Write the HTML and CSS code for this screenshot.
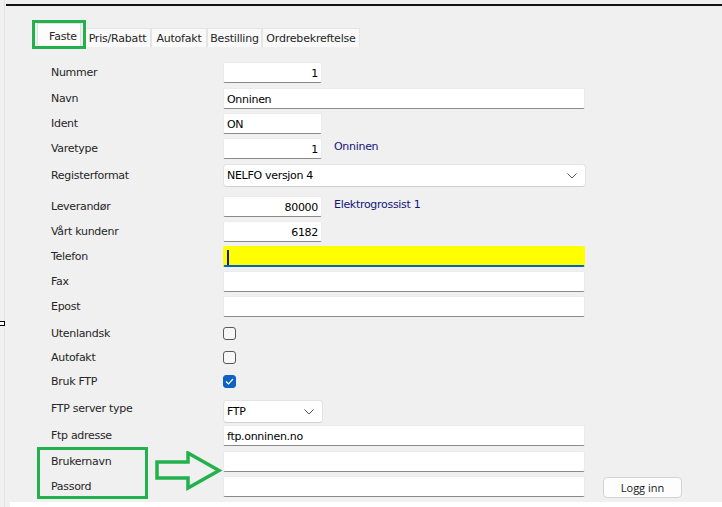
FILE: index.html
```html
<!DOCTYPE html>
<html lang="no">
<head>
    <meta charset="UTF-8">
    <title>Leverandør</title>
    <link rel="stylesheet" href="styles.css">
</head>
<body>

<div class="marker"></div>

<div class="window">
    <div class="topline"></div>

    <div class="tabs">
        <div class="tab active">Faste</div>
        <div class="tab w-pris">Pris/Rabatt</div>
        <div class="tab w-auto">Autofakt</div>
        <div class="tab w-best">Bestilling</div>
        <div class="tab w-ordre">Ordrebekreftelse</div>
    </div>

    <div class="form">
        <div class="row h26">
            <div class="label">Nummer</div>
            <div class="input short num">1</div>
        </div>
        <div class="row">
            <div class="label">Navn</div>
            <div class="input wide">Onninen</div>
        </div>
        <div class="row">
            <div class="label">Ident</div>
            <div class="input short">ON</div>
        </div>
        <div class="row h26">
            <div class="label">Varetype</div>
            <div class="input short num">1</div>
            <div class="info">Onninen</div>
        </div>
        <div class="row h32">
            <div class="label tall">Registerformat</div>
            <div class="select wide">
                <span>NELFO versjon 4</span>
                <svg width="10" height="6" viewBox="0 0 10 6"><path d="M0.5 0.5 L5 5 L9.5 0.5" fill="none" stroke="#555" stroke-width="1"/></svg>
            </div>
        </div>
        <div class="row">
            <div class="label">Leverandør</div>
            <div class="input short num">80000</div>
            <div class="info">Elektrogrossist 1</div>
        </div>
        <div class="row">
            <div class="label">Vårt kundenr</div>
            <div class="input short num">6182</div>
        </div>
        <div class="row">
            <div class="label">Telefon</div>
            <div class="input wide focus"><span class="caret"></span></div>
        </div>
        <div class="row">
            <div class="label">Fax</div>
            <div class="input wide"></div>
        </div>
        <div class="row h31">
            <div class="label">Epost</div>
            <div class="input wide"></div>
        </div>
        <div class="row h24">
            <div class="label check-label">Utenlandsk</div>
            <span class="checkbox"></span>
        </div>
        <div class="row h24">
            <div class="label check-label">Autofakt</div>
            <span class="checkbox"></span>
        </div>
        <div class="row">
            <div class="label check-label">Bruk FTP</div>
            <span class="checkbox checked">
                <svg width="9" height="7" viewBox="0 0 9 7"><path d="M1 3.5 L3.5 6 L8 1" fill="none" stroke="#fff" stroke-width="1.2"/></svg>
            </span>
        </div>
        <div class="row">
            <div class="label small">FTP server type</div>
            <div class="select short">
                <span>FTP</span>
                <svg width="10" height="6" viewBox="0 0 10 6"><path d="M0.5 0.5 L5 5 L9.5 0.5" fill="none" stroke="#555" stroke-width="1"/></svg>
            </div>
        </div>
        <div class="row h26">
            <div class="label">Ftp adresse</div>
            <div class="input wide">ftp.onninen.no</div>
        </div>
        <div class="row">
            <div class="label">Brukernavn</div>
            <div class="input wide"></div>
        </div>
        <div class="row">
            <div class="label">Passord</div>
            <div class="input wide"></div>
            <button class="login">Logg inn</button>
        </div>
    </div>

    <div class="bottom"></div>

    <!-- annotation marks drawn over the screenshot -->
    <div class="mark mark-tab"></div>
    <div class="mark mark-login"></div>
    <svg class="arrow" width="68" height="40" viewBox="0 0 68 40">
        <path d="M2 11 H33 V2 L64 19.5 L33 37 V27 H2 Z" fill="none" stroke="#22b14c" stroke-width="3.5" stroke-linejoin="miter"/>
    </svg>
</div>

</body>
</html>
```

FILE: styles.css
```css
body {
    margin: 0;
    background-color: #f0f0f0;
    font-family: "DejaVu Sans", sans-serif;
    font-size: 11px;
    color: #262626;
    position: relative;
}
.window {
    position: relative;
    width: 718px;
    height: 507px;
    overflow: hidden;
    border-left: 1px solid #e3e3e3;
    margin-left: 4px;
    box-sizing: border-box;
}
.topline {
    height: 2px;
    background: #111;
    margin-top: 4px;
    margin-left: 1px;
}
.marker {
    position: absolute;
    left: -1px;
    top: 321px;
    width: 4px;
    height: 3px;
    border: 1px solid #000;
    background: #fff;
    z-index: 2;
}
.tabs {
    display: flex;
    align-items: flex-end;
    margin-top: 17px;
    margin-left: 32px;
    height: 24px;
}
.tab {
    height: 19px;
    line-height: 19px;
    text-align: center;
    background: #f9f9f9;
    border: 1px solid #e5e5e5;
    border-bottom: none;
    box-sizing: border-box;
    letter-spacing: -0.2px;
}
.tab.active {
    height: 24px;
    line-height: 26px;
    width: 44px;
    padding-left: 8px;
    margin-right: 3px;
    background: #fcfcfc;
    border-color: #e0e0e0;
}
.w-pris { width: 67px; }
.w-auto { width: 56px; }
.w-best { width: 55px; }
.w-ordre { width: 98px; }
.form {
    margin-top: 15px;
    padding-left: 46px;
}
.row {
    display: flex;
    align-items: flex-start;
    height: 25px;
}
.row.h24 { height: 24px; }
.row.h26 { height: 26px; }
.row.h31 { height: 31px; }
.row.h32 { height: 32px; }
.label {
    width: 172px;
    line-height: 21px;
    letter-spacing: -0.3px;
}
.label.tall { line-height: 23px; }
.label.small { line-height: 17px; }
.label.check-label { line-height: 13px; }
.input {
    height: 21px;
    line-height: 21px;
    background: #fff;
    border: 1px solid #ebebeb;
    border-bottom-color: #8a8a8a;
    border-radius: 2px;
    box-sizing: border-box;
    padding: 0 3px;
    color: #000;
    letter-spacing: -0.3px;
}
.input.short { width: 99px; }
.input.wide { width: 362px; }
.input.num { text-align: right; }
.input.focus {
    background: #ffff00;
    border-color: #ffff00;
    border-bottom: 2px solid #0067c0;
    padding-top: 3px;
}
.caret {
    display: block;
    width: 2px;
    height: 15px;
    background: #1a1a66;
}
.info {
    margin-left: 12px;
    line-height: 18px;
    color: #14147a;
    letter-spacing: -0.3px;
}
.select {
    height: 23px;
    background: #fff;
    border: 1px solid #e3e3e3;
    border-bottom-color: #d0d0d0;
    border-radius: 4px;
    box-sizing: border-box;
    padding: 0 8px 0 3px;
    display: flex;
    align-items: center;
    justify-content: space-between;
    color: #000;
    letter-spacing: -0.3px;
}
.select.wide { width: 363px; }
.select.short { width: 100px; }
.checkbox {
    width: 13px;
    height: 13px;
    border: 1px solid #5a5a5a;
    border-radius: 3px;
    background: #f7f7f7;
    box-sizing: border-box;
    display: flex;
    align-items: center;
    justify-content: center;
}
.checkbox.checked {
    background: #0f62c2;
    border-color: #0f62c2;
}
.login {
    margin: 1px 0 0 18px;
    width: 79px;
    height: 21px;
    background: #fdfdfd;
    border: 1px solid #d3d3d3;
    border-radius: 4px;
    font-family: "Open Sans", sans-serif;
    font-size: 11px;
    color: #1a1a1a;
    padding: 0;
}
.bottom {
    position: absolute;
    left: 5px;
    right: 0;
    bottom: 0;
    height: 5px;
    background: #fff;
}
.mark {
    position: absolute;
    border: 3px solid #22b14c;
    box-sizing: border-box;
}
.mark-tab {
    left: 27px;
    top: 20px;
    width: 54px;
    height: 29px;
}
.mark-login {
    left: 32px;
    top: 447px;
    width: 111px;
    height: 52px;
}
.arrow {
    position: absolute;
    left: 150px;
    top: 451px;
}
```
